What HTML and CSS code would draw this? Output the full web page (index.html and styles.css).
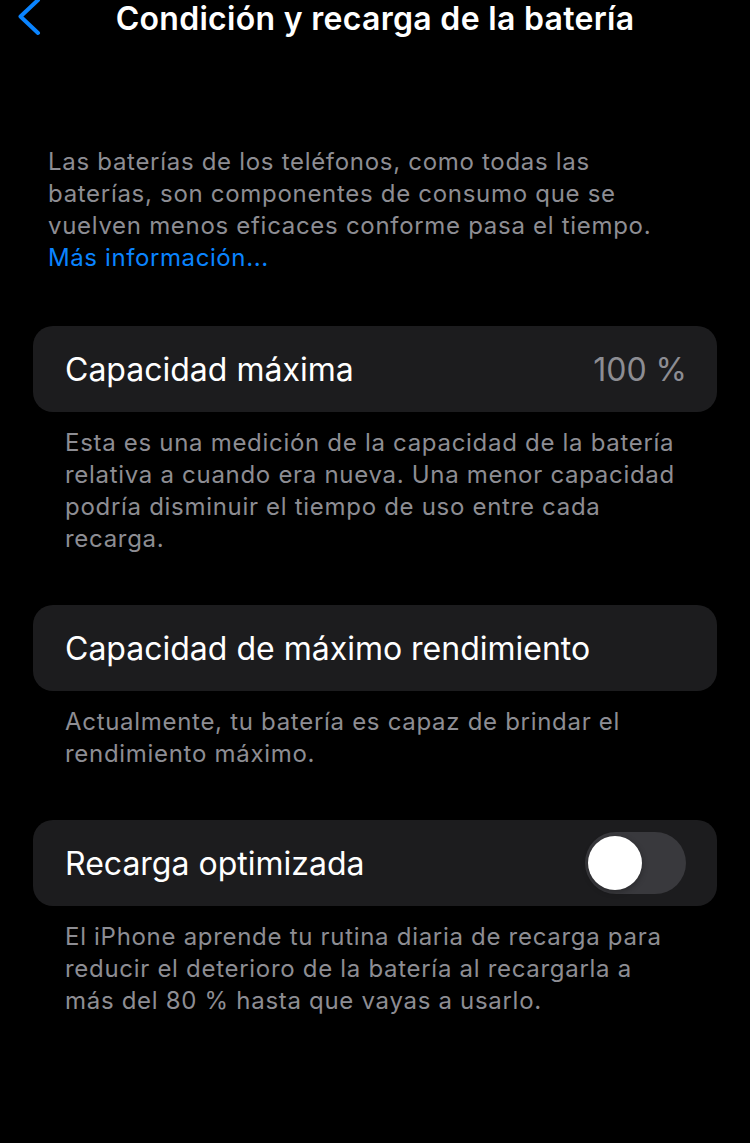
FILE: index.html
```html
<!DOCTYPE html>
<html lang="es">
<head>
<meta charset="utf-8">
<title>Condición y recarga de la batería</title>
<link rel="stylesheet" href="styles.css">
</head>
<body>
<div class="screen">
  <header class="nav">
    <span class="back">
      <svg width="26" height="36" viewBox="0 0 26 36"><path d="M21 0 L3.5 16.5 L21 33" fill="none" stroke="#0a84ff" stroke-width="4" stroke-linecap="round" stroke-linejoin="round"/></svg>
    </span>
    <h1 class="title">Condición y recarga de la batería</h1>
  </header>

  <p class="intro">Las baterías de los teléfonos, como todas las baterías, son componentes de consumo que se vuelven menos eficaces conforme pasa el tiempo.<br><a class="link">Más información...</a></p>

  <section class="group">
    <div class="card">
      <span class="label">Capacidad máxima</span>
      <span class="value">100 %</span>
    </div>
    <p class="foot">Esta es una medición de la capacidad de la batería relativa a cuando era nueva. Una menor capacidad podría disminuir el tiempo de uso entre cada recarga.</p>
  </section>

  <section class="group">
    <div class="card">
      <span class="label">Capacidad de máximo rendimiento</span>
    </div>
    <p class="foot">Actualmente, tu batería es capaz de brindar el rendimiento máximo.</p>
  </section>

  <section class="group">
    <div class="card">
      <span class="label">Recarga optimizada</span>
      <span class="toggle"><span class="knob"></span></span>
    </div>
    <p class="foot">El iPhone aprende tu rutina diaria de recarga para reducir el deterioro de la batería al recargarla a más del 80 % hasta que vayas a usarlo.</p>
  </section>
</div>
</body>
</html>
```

FILE: styles.css
```css
html, body {
  margin: 0;
  padding: 0;
  background: #000;
}
body {
  font-family: Inter, Roboto, "Liberation Sans", sans-serif;
  color: #fff;
  width: 750px;
  height: 1143px;
  overflow: hidden;
}
.screen {
  display: flex;
  flex-direction: column;
}
.nav {
  position: relative;
  height: 38px;
  display: flex;
  align-items: flex-start;
  justify-content: center;
}
.back {
  position: absolute;
  left: 17px;
  top: 0;
  display: flex;
}
.title {
  margin: 0;
  font-size: 32px;
  font-weight: 600;
  line-height: 38px;
  letter-spacing: 0.3px;
}
.intro {
  margin: 108px 0 0;
  padding: 0 80px 0 48px;
  font-size: 24px;
  line-height: 32px;
  letter-spacing: 0.7px;
  color: #8d8d93;
}
.link {
  color: #0a84ff;
  letter-spacing: 0.6px;
}
.group {
  margin-top: 52px;
}
.group + .group {
  margin-top: 50px;
}
.card {
  margin: 0 33px;
  height: 86px;
  background: #1c1c1e;
  border-radius: 20px;
  display: flex;
  align-items: center;
  justify-content: space-between;
  padding: 0 32px;
}
.label {
  font-size: 32px;
  color: #fff;
}
.value {
  font-size: 32px;
  color: #8d8d93;
  margin-right: -2px;
}
.toggle {
  width: 101px;
  height: 62px;
  border-radius: 31px;
  background: #39393d;
  display: flex;
  align-items: center;
  padding-left: 3px;
  box-sizing: border-box;
  margin-right: -1px;
}
.knob {
  width: 54px;
  height: 54px;
  border-radius: 50%;
  background: #fff;
  box-shadow: 0 2px 6px rgba(0,0,0,0.3);
}
.foot {
  margin: 0;
  padding: 15px 70px 0 65px;
  font-size: 24px;
  line-height: 32px;
  letter-spacing: 0.7px;
  color: #8d8d93;
}
```
